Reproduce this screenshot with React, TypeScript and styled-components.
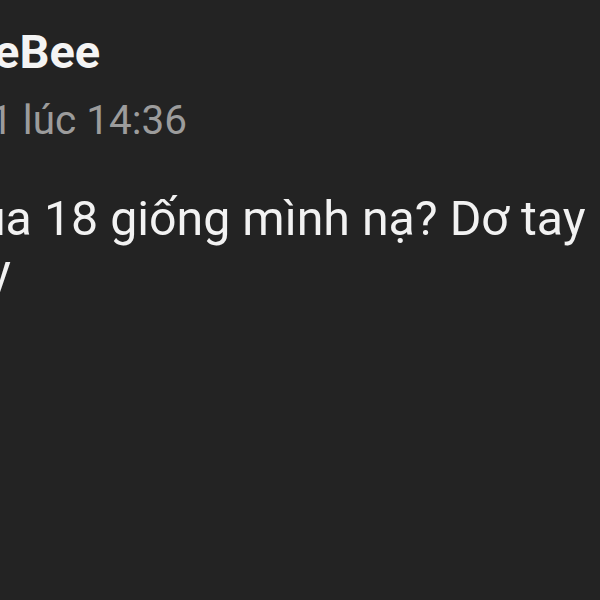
import React from 'react'
import styled, { createGlobalStyle } from 'styled-components'

const GlobalStyle = createGlobalStyle`
    html, body {
        margin: 0;
        padding: 0;
        background: #232323;
    }
    body {
        font-family: Roboto, "Noto Sans", "Liberation Sans", sans-serif;
    }
`

const Screen = styled.div`
    width: 600px;
    height: 600px;
    overflow: hidden;
    background: #232323;
    padding-top: 27px;
    box-sizing: border-box;
`

const Comment = styled.div`
    display: flex;
    flex-direction: column;
`

const Line = styled.div<{ $pull: number }>`
    margin-left: -${p => p.$pull}px;
    white-space: nowrap;
`

const Author = styled(Line)`
    font-size: 47px;
    line-height: 50px;
    font-weight: 700;
    color: #f4f4f4;
`

const Time = styled(Line)`
    margin-top: 21px;
    font-size: 40.5px;
    line-height: 44px;
    color: #9c9c9c;
`

const Body = styled.div`
    margin-top: 50px;
    display: flex;
    flex-direction: column;
`

const BodyLine = styled(Line)`
    font-size: 48.3px;
    line-height: 53px;
    color: #f2f2f2;
`

const App = () => {
    return (
        <>
            <GlobalStyle />
            <Screen>
                <Comment>
                    <Author $pull={6}>eBee</Author>
                    <Time $pull={10}>1 lúc 14:36</Time>
                    <Body>
                        <BodyLine $pull={21}>ua 18 giống mình nạ? Dơ tay</BodyLine>
                        <BodyLine $pull={12}>y</BodyLine>
                    </Body>
                </Comment>
            </Screen>
        </>
    )
}

export default App
